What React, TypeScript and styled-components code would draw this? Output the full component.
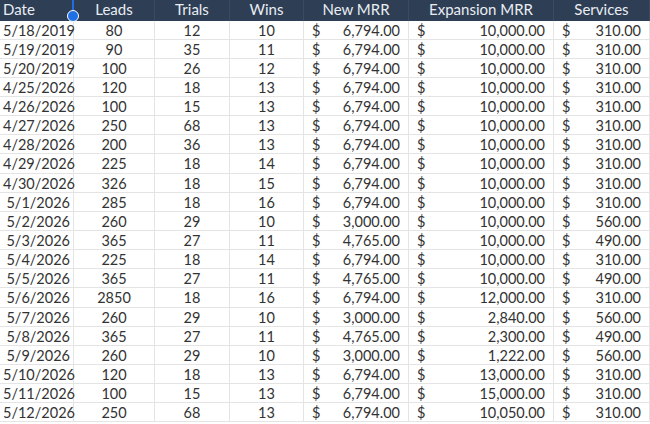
import React from "react";
import styled, { createGlobalStyle } from "styled-components";

const Global = createGlobalStyle`
  html, body { margin: 0; padding: 0; background: #ffffff; }
  body { font-family: Lato, "Noto Sans", sans-serif; }
`;

const COLS = "74px 81px 75px 74px 105px 145px 96px";

const Sheet = styled.div`
  width: 650px;
  display: grid;
  grid-template-columns: ${COLS};
  grid-auto-rows: 19.15px;
  grid-template-rows: 20.5px;
  position: relative;
`;

const HeadCell = styled.div<{ $align: "left" | "center" }>`
  box-sizing: border-box;
  background: #2e3e55;
  color: #e9edf2;
  font-size: 15px;
  line-height: 19px;
  padding: 0 3px;
  text-align: ${(p) => p.$align};
  border-right: 1px solid #3a4a60;
  white-space: nowrap;
  overflow: hidden;
  position: relative;
`;

const SelectedHead = styled(HeadCell)`
  border-right: 2px solid #1f6fe5;
  overflow: visible;
`;

const Handle = styled.span`
  position: absolute;
  right: -6.5px;
  bottom: -1px;
  width: 10px;
  height: 10px;
  border-radius: 50%;
  background: #1f6fe5;
  border: 1px solid #ffffff;
  z-index: 2;
`;

const Cell = styled.div<{ $align: "right" | "center" }>`
  box-sizing: border-box;
  color: #333333;
  font-size: 14.5px;
  line-height: 19px;
  padding: 0 3px 0 3px;
  text-align: ${(p) => p.$align};
  border-right: 1px solid #e4e4e4;
  border-bottom: 1px solid #e4e4e4;
  white-space: nowrap;
`;

const MoneyCell = styled.div`
  box-sizing: border-box;
  color: #333333;
  font-size: 14.5px;
  line-height: 19px;
  padding: 0 8px 0 8px;
  display: flex;
  justify-content: space-between;
  border-right: 1px solid #e4e4e4;
  border-bottom: 1px solid #e4e4e4;
  white-space: nowrap;
`;

type Row = [string, string, string, string, string, string, string];

const rows: Row[] = [
  ["5/18/2019", "80", "12", "10", "6,794.00", "10,000.00", "310.00"],
  ["5/19/2019", "90", "35", "11", "6,794.00", "10,000.00", "310.00"],
  ["5/20/2019", "100", "26", "12", "6,794.00", "10,000.00", "310.00"],
  ["4/25/2026", "120", "18", "13", "6,794.00", "10,000.00", "310.00"],
  ["4/26/2026", "100", "15", "13", "6,794.00", "10,000.00", "310.00"],
  ["4/27/2026", "250", "68", "13", "6,794.00", "10,000.00", "310.00"],
  ["4/28/2026", "200", "36", "13", "6,794.00", "10,000.00", "310.00"],
  ["4/29/2026", "225", "18", "14", "6,794.00", "10,000.00", "310.00"],
  ["4/30/2026", "326", "18", "15", "6,794.00", "10,000.00", "310.00"],
  ["5/1/2026", "285", "18", "16", "6,794.00", "10,000.00", "310.00"],
  ["5/2/2026", "260", "29", "10", "3,000.00", "10,000.00", "560.00"],
  ["5/3/2026", "365", "27", "11", "4,765.00", "10,000.00", "490.00"],
  ["5/4/2026", "225", "18", "14", "6,794.00", "10,000.00", "310.00"],
  ["5/5/2026", "365", "27", "11", "4,765.00", "10,000.00", "490.00"],
  ["5/6/2026", "2850", "18", "16", "6,794.00", "12,000.00", "310.00"],
  ["5/7/2026", "260", "29", "10", "3,000.00", "2,840.00", "560.00"],
  ["5/8/2026", "365", "27", "11", "4,765.00", "2,300.00", "490.00"],
  ["5/9/2026", "260", "29", "10", "3,000.00", "1,222.00", "560.00"],
  ["5/10/2026", "120", "18", "13", "6,794.00", "13,000.00", "310.00"],
  ["5/11/2026", "100", "15", "13", "6,794.00", "15,000.00", "310.00"],
  ["5/12/2026", "250", "68", "13", "6,794.00", "10,050.00", "310.00"],
];

const Money = ({ v }: { v: string }) => (
  <MoneyCell>
    <span>$</span>
    <span>{v}</span>
  </MoneyCell>
);

export default function App() {
  return (
    <>
      <Global />
      <Sheet>
        <SelectedHead $align="left">
          Date
          <Handle />
        </SelectedHead>
        <HeadCell $align="center">Leads</HeadCell>
        <HeadCell $align="center">Trials</HeadCell>
        <HeadCell $align="center">Wins</HeadCell>
        <HeadCell $align="center">New MRR</HeadCell>
        <HeadCell $align="center">Expansion MRR</HeadCell>
        <HeadCell $align="center">Services</HeadCell>
        {rows.map((r, i) => (
          <React.Fragment key={i}>
            <Cell $align="right">{r[0]}</Cell>
            <Cell $align="center">{r[1]}</Cell>
            <Cell $align="center">{r[2]}</Cell>
            <Cell $align="center">{r[3]}</Cell>
            <Money v={r[4]} />
            <Money v={r[5]} />
            <Money v={r[6]} />
          </React.Fragment>
        ))}
      </Sheet>
    </>
  );
}
